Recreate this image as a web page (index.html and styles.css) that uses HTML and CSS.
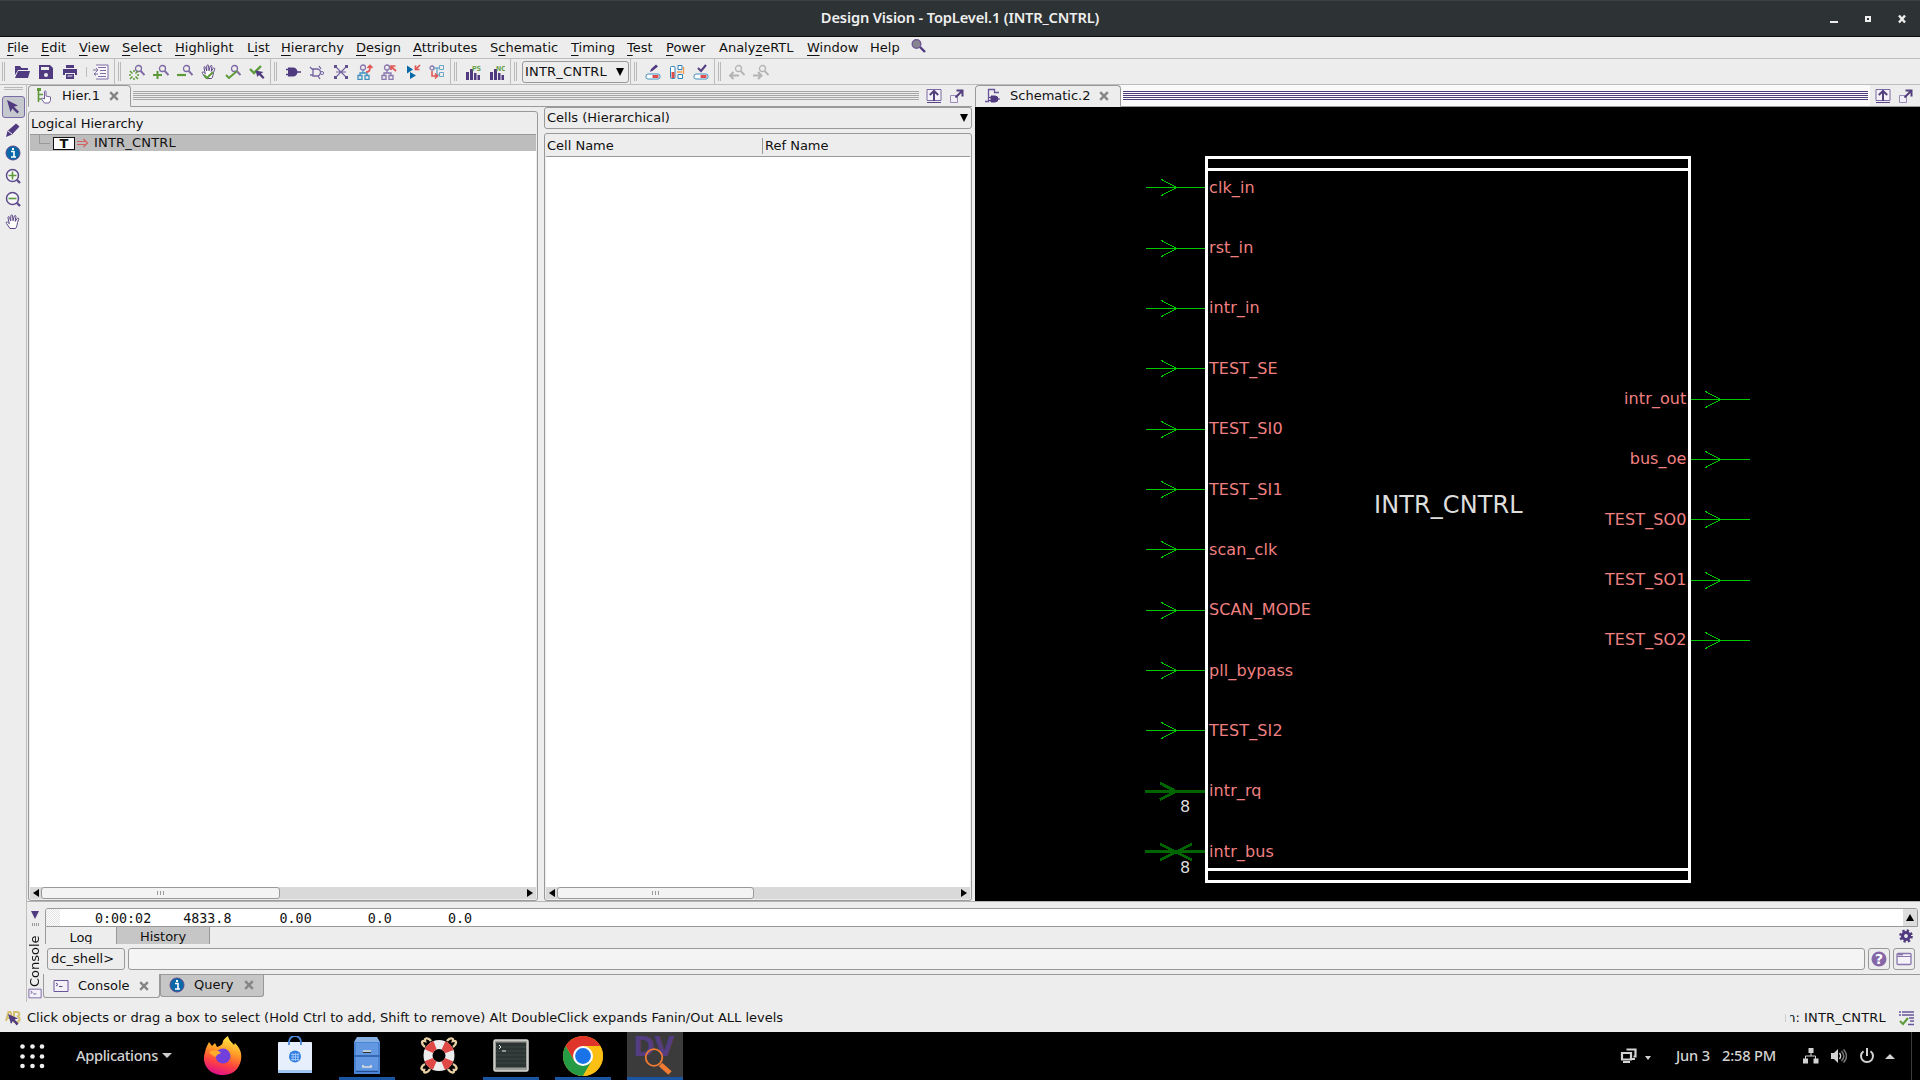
FILE: index.html
```html
<!DOCTYPE html>
<html lang="en">
<head>
<meta charset="utf-8">
<title>Design Vision - TopLevel.1 (INTR_CNTRL)</title>
<link rel="stylesheet" href="styles.css">
</head>
<body>
<svg class="defs" width="0" height="0">
  <symbol id="mag" viewBox="0 0 16 16"><circle cx="9.500" cy="4.500" r="3" fill="none" stroke="#7d68a3" stroke-width="1.300"/><path d="M11.800 7l3.700 4" stroke="#7d68a3" stroke-width="1.900"/></symbol>
  <symbol id="info" viewBox="0 0 16 16"><circle cx="8" cy="8" r="7" fill="#0868a8" stroke="#5c4a8a"/><path d="M6 6.500h3v5M6 12h5" fill="none" stroke="#fff" stroke-width="1.600"/><rect x="7" y="3" width="2" height="2" fill="#fff"/></symbol>
  <symbol id="hand" viewBox="0 0 16 16"><path d="M5 14.500L1.500 9.500C.5 8 2 7.500 3.200 8.700L4.300 9.700 3 3.800c-.2-1.500 1.300-1.500 1.600-.3L5.700 7 5.900 1.800c.1-1.200 1.600-1.200 1.700 0L8 6.700l1.400-4.600c.4-1.100 1.800-.7 1.500.5L10.200 7.400l2-3c.7-1 1.900-.2 1.400.9L12.500 8.500c-.5 2-.5 4.500-2 6z" fill="#fff" stroke="#5a4385"/></symbol>
  <symbol id="dock" viewBox="0 0 16 16"><path d="M1 1.500h14v11H1z" fill="#f4f2f8" stroke="#7a68a2"/><path d="M1 14.500h14" stroke="#5a4385"/><path d="M8 13V4M3.800 7L8 3l4.200 4" fill="none" stroke="#55407f" stroke-width="2"/></symbol>
  <symbol id="float" viewBox="0 0 16 16"><path d="M1.500 7.500h7v7h-7z" fill="#f1eff6" stroke="#9a8bb8"/><path d="M6.500 9.500L13 3M7.500 2.500h6v6" fill="none" stroke="#55407f" stroke-width="2"/></symbol>
  <symbol id="term" viewBox="0 0 16 14"><path d="M1 1.500h14v11H1z" fill="#f4f2f8" stroke="#6a559a"/><path d="M3 4l2 1.500L3 7M6 7.500h3.500" fill="none" stroke="#5a4385"/></symbol>
  <symbol id="x" viewBox="0 0 10 10"><path d="M1.200 1.200l7.600 7.600M8.800 1.200L1.200 8.800" stroke="#858585" stroke-width="2.400"/></symbol>
  <symbol id="arrow" viewBox="0 0 16 16"><path d="M2 1l11 5.500-4 1.300 5 5-1.700 1.700-5-5-1.800 3.800z" fill="#513b80"/></symbol>
  <symbol id="pin" viewBox="0 0 60 20" overflow="visible"><path d="M0 10.500h60" stroke="#00c800" shape-rendering="crispEdges"/><path d="M15.500 2.500l15 8-15 8" fill="none" stroke="#00c800" shape-rendering="crispEdges"/></symbol>
  <symbol id="bars" viewBox="0 0 16 16"><path d="M1 8h3v8H1zM5 5h3v11H5zM9 9h2.500v7H9zM12.500 11H15v5h-2.500z" fill="#513b80"/></symbol>
  <symbol id="pill" viewBox="0 0 16 16"><rect x="1" y="10" width="14" height="5" rx="2" fill="#fff" stroke="#4192bd"/><path d="M7.500 11h6v3h-6z" fill="#dd4d4d"/></symbol>
</svg>

<header class="title"><span>Design Vision - TopLevel.1 (INTR_CNTRL)</span>
  <svg width="80" height="12"><path d="M0 8h8v2H0z" fill="#eee"/><path d="M36 4h4v4h-4z" fill="none" stroke="#eee" stroke-width="2"/><path d="M69 2.500l6 7M75 2.500l-6 7" stroke="#eee" stroke-width="2.400"/></svg>
</header>

<nav class="menu">
  <span><u>F</u>ile</span><span><u>E</u>dit</span><span><u>V</u>iew</span><span><u>S</u>elect</span><span><u>H</u>ighlight</span><span>L<u>i</u>st</span><span><u>H</u>ierarchy</span><span><u>D</u>esign</span><span><u>A</u>ttributes</span><span>S<u>c</u>hematic</span><span><u>T</u>iming</span><span><u>T</u>est</span><span><u>P</u>ower</span><span>Analy<u>z</u>eRTL</span><span><u>W</u>indow</span><span>Help</span>
  <svg width="16" height="16"><circle cx="5.500" cy="6" r="4.300" fill="#87858f" stroke="#6e5b96" stroke-width="1.400"/><path d="M9 9l5 5" stroke="#513b80" stroke-width="2.400"/></svg>
</nav>

<div class="toolbar">
  <div class="group first"><i class="grip"></i>
    <svg viewBox="0 0 16 16"><path d="M1 2h5l1.500 2H14v2H4L1 11z M4 7h12l-2 7H1z" fill="#513b80"/></svg>
    <svg viewBox="0 0 16 16"><path d="M1 1h11l3 3v11H1z" fill="#513b80"/><path d="M3 3h8v3H3z" fill="#ededed"/><circle cx="8" cy="11" r="2" fill="#ededed"/></svg>
    <svg viewBox="0 0 16 16"><path d="M4 1h8v3H4zM1 5h14v6h-2V9H3v2H1zM4 10h8v5H4z" fill="#513b80"/><path d="M5.500 12h5" stroke="#ededed"/></svg>
    <i class="sep"></i>
    <svg viewBox="0 0 16 16"><path d="M3 1h12v14H3" fill="#f7f6fa" stroke="#7f6da6"/><path d="M5 3.500h8M7 6.500h6M7 9.500h6M5 12.500h8" stroke="#7f6da6"/><path d="M0 6h5M3 4l2 2-2 2M5 10H1M3 8.500L1 10l2 1.500" fill="none" stroke="#7f6da6"/></svg>
  </div>
  <div class="group g6"><i class="grip"></i>
    <svg viewBox="0 0 16 16"><use href="#mag" width="16" height="16"/><path d="M1 7l2.500 2.500M9 7L6.500 9.500M1 15l2.500-2.500M9 15l-2.500-2.500M0 11h2M8 11h2M5 6v2M5 14v2" stroke="#5c9a3a" stroke-width="1.500"/></svg>
    <svg viewBox="0 0 16 16"><use href="#mag" width="16" height="16"/><path d="M0 11h9M4.500 7v8" stroke="#5c9a3a" stroke-width="2"/></svg>
    <svg viewBox="0 0 16 16"><use href="#mag" width="16" height="16"/><path d="M0 11h9" stroke="#5c9a3a" stroke-width="2.200"/></svg>
    <svg viewBox="0 0 16 16"><use href="#hand" width="16" height="16"/><path d="M3 11l3 3 6-6" fill="none" stroke="#5c9a3a" stroke-width="2"/></svg>
    <svg viewBox="0 0 16 16"><use href="#mag" width="16" height="16"/><path d="M1 11l3 3 8-7" fill="none" stroke="#5c9a3a" stroke-width="2"/></svg>
    <svg viewBox="0 0 16 16"><path d="M1 5l4 4 7-7" fill="none" stroke="#5c9a3a" stroke-width="2.400"/><path d="M6.500 6.500l8 1.500-2.500 1.500 3.500 4-1.500 1.500-4-4-1.700 2z" fill="#513b80"/></svg>
  </div>
  <div class="group g7"><i class="grip"></i>
    <svg viewBox="0 0 16 16"><path d="M3 3.500h5a4.500 4.500 0 010 9H3z" fill="#513b80"/><path d="M1 5.500h3M1 10.500h3M12 8h4" stroke="#513b80" stroke-width="1.500"/></svg>
    <svg viewBox="0 0 16 16"><path d="M4 5h4a3.500 3.500 0 010 7H4zM1 3l3 3M1 11h3M11.500 9H15M10 2l2 3M9 12l2 3" fill="none" stroke="#7462a0" stroke-width="1.300"/><circle cx="13" cy="9" r="1.500" fill="#fff" stroke="#7462a0"/></svg>
    <svg viewBox="0 0 16 16"><path d="M2 2l12 12M14 2L2 14M3 8h10" stroke="#7462a0" stroke-width="1.100"/><path d="M1 1h3v3H1zM12 1h3v3h-3zM1 12h3v3H1zM12 12h3v3h-3z" fill="#65518e"/></svg>
    <svg viewBox="0 0 16 16"><circle cx="6" cy="3.500" r="2.500" fill="none" stroke="#8976ae" stroke-width="1.300"/><path d="M6 6v3M3 11V9h7v2M1 11.500h4v4H1zM8 11.500h4v4H8z" fill="none" stroke="#4291bd" stroke-width="1.300"/><path d="M9 8c4 0 4-2 4-6M10.500 4L13 1.500 15.500 4" fill="none" stroke="#e05654" stroke-width="1.700"/></svg>
    <svg viewBox="0 0 16 16"><circle cx="6" cy="3.500" r="2.500" fill="none" stroke="#8976ae" stroke-width="1.300"/><path d="M6 6v3M3 11V9h7v2M1 11.500h4v4H1zM8 11.500h4v4H8z" fill="none" stroke="#8976ae" stroke-width="1.300"/><path d="M15 7L10 2.500M10 6V2h4.500" fill="none" stroke="#e05654" stroke-width="1.700"/></svg>
    <svg viewBox="0 0 16 16"><path d="M2 1.500l6 4-6 4zM5 8l6 3.500L5 15zM2 10h3" fill="#0868a8"/><path d="M15 1l-4 4M10.500 1.500v4h4" fill="none" stroke="#e05654" stroke-width="1.700"/></svg>
    <svg viewBox="0 0 16 16"><circle cx="3" cy="4" r="2" fill="none" stroke="#8976ae" stroke-width="1.300"/><path d="M5 4h3v7h3M8 4h2" fill="none" stroke="#4291bd"/><path d="M10.500 1.500h4v4h-4zM10.500 8.500h4v4h-4z" fill="none" stroke="#69a8c8"/><path d="M3 7v5h5M6 9.500L8.500 12 6 14.500" fill="none" stroke="#e05654" stroke-width="1.600"/></svg>
  </div>
  <div class="group g2"><i class="grip"></i>
    <svg viewBox="0 0 16 16"><use href="#bars" width="16" height="16"/><text class="tiny" x="7" y="6.500">PS</text></svg>
    <svg viewBox="0 0 16 16"><use href="#bars" width="16" height="16"/><text class="tiny" x="7" y="6.500">NC</text></svg>
  </div>
  <div class="group gc"><i class="grip"></i><div class="combo"><span class="name">INTR_CNTRL</span><b class="down"></b></div></div>
  <div class="group g3"><i class="grip"></i>
    <svg viewBox="0 0 16 16"><use href="#pill" width="16" height="16"/><path d="M5 8l1-3 5-4.500 2 2-5 4z" fill="#513b80"/></svg>
    <svg viewBox="0 0 16 16"><rect x="1.500" y="2.500" width="4.500" height="12" rx="1" fill="#fff" stroke="#2f83b4"/><path d="M2.500 8h3v6h-3z" fill="#dd4d4d"/><path d="M9 1.500h4v4H9zM9 10.500h4.500v4H9z" fill="#fff" stroke="#2f83b4"/><path d="M8 8h5M14.500 3v7" stroke="#f29a52" stroke-width="1.400"/></svg>
    <svg viewBox="0 0 16 16"><use href="#pill" width="16" height="16"/><path d="M5 4l3 3 5-6" fill="none" stroke="#513b80" stroke-width="2"/></svg>
  </div>
  <div class="group last"><i class="grip"></i>
    <svg viewBox="0 0 16 16" class="off"><use href="#mag" width="16" height="16"/><path d="M1 11.500h9M4.500 8L1 11.500 4.500 15" fill="none" stroke="#7d68a3" stroke-width="2"/></svg>
    <svg viewBox="0 0 16 16" class="off"><use href="#mag" width="16" height="16"/><path d="M0 11.500h8M5 8l3.500 3.500L5 15" fill="none" stroke="#7d68a3" stroke-width="2"/></svg>
  </div>
</div>

<main class="work">
  <aside class="tools"><i class="hgrip"></i>
    <span class="on"><svg viewBox="0 0 16 16"><use href="#arrow"/></svg></span>
    <span><svg viewBox="0 0 16 16"><path d="M1 15l1.500-6L11 1.500l3.500 3L7 12.500z" fill="#513b80"/><path d="M3 9l4 3" stroke="#ededed"/></svg></span>
    <span><svg viewBox="0 0 16 16"><use href="#info"/></svg></span>
    <span><svg viewBox="0 0 16 16"><circle cx="7.500" cy="7.500" r="6" fill="#f7f7fa" stroke="#5c4a8a" stroke-width="1.500"/><path d="M12 12l3 3" stroke="#5c4a8a" stroke-width="2.400"/><path d="M3.500 7.500h8M7.500 3.500v8" stroke="#5c9a3a" stroke-width="1.600"/></svg></span>
    <span><svg viewBox="0 0 16 16"><circle cx="7.500" cy="7.500" r="6" fill="#f7f7fa" stroke="#5c4a8a" stroke-width="1.500"/><path d="M12 12l3 3" stroke="#5c4a8a" stroke-width="2.400"/><path d="M3.500 7.500h8" stroke="#5c9a3a" stroke-width="1.600"/></svg></span>
    <span><svg viewBox="0 0 16 16"><use href="#hand"/></svg></span>
  </aside>

  <div class="stack">
    <div class="docks">
      <section class="hier">
        <div class="tabrow">
          <div class="tab"><svg width="16" height="16"><path d="M1.500 2v12M2 6.500h4M2 11h4" stroke="#5c9a3a" stroke-width="1.600" fill="none"/><path d="M0 0h4v3H0z" fill="#5c9a3a"/><path d="M7.500 15l-3-4 1-1 2 1V3.500c0-1 1.500-1 1.500 0V8l4.500 1v3.500L12 15z" fill="#fff" stroke="#7462a0"/></svg><span>Hier.1</span><svg width="10" height="10"><use href="#x"/></svg></div>
          <i class="stripes"></i>
          <svg width="16" height="16"><use href="#dock"/></svg><svg width="16" height="16"><use href="#float"/></svg>
        </div>
        <div class="panes">
          <div class="frame tree">
            <div class="head">Logical Hierarchy</div>
            <div class="row"><i class="branch"></i><b>T</b><svg width="12" height="10"><path d="M0 3.500h8M0 6.500h8M6.500 1l4 4-4 4" fill="none" stroke="#d2605e" stroke-width="1.200"/></svg><span class="name">INTR_CNTRL</span></div>
            <div class="fill"></div>
            <div class="hscroll"><i class="la"></i><span class="thumb t1"><em></em></span><i class="ra"></i></div>
          </div>
          <div class="cells">
            <div class="combo wide">Cells (Hierarchical)<b class="down"></b></div>
            <div class="frame list">
              <div class="cols"><span>Cell Name</span><span>Ref Name</span></div>
              <div class="fill"></div>
              <div class="hscroll"><i class="la"></i><span class="thumb t2"><em></em></span><i class="ra"></i></div>
            </div>
          </div>
        </div>
      </section>

      <section class="schem">
        <div class="tabrow active">
          <div class="tab"><svg width="16" height="16"><path d="M0 13.500h3.500v-12h6v3H14" fill="none" stroke="#6a559a" stroke-width="1.300"/><path d="M6 8h4a3 3 0 010 6H6zM4 9.500h2M4 12.500h2M12 11h3" fill="#513b80" stroke="#513b80"/></svg><span>Schematic.2</span><svg width="10" height="10"><use href="#x"/></svg></div>
          <i class="stripes"></i>
          <div class="winbtns"><svg width="16" height="16"><use href="#dock"/></svg><svg width="16" height="16"><use href="#float"/></svg></div>
        </div>
        <svg class="canvas" width="945" height="794" viewBox="975 107 945 794">
          <path d="M1206.500 157.500H1689.500V881.500H1206.500zM1206.500 169.500H1689.500M1206.500 869.500H1689.500" fill="none" stroke="#fff" stroke-width="3"/>
          <use href="#pin" x="1146" y="177" width="60" height="20"/><use href="#pin" x="1146" y="238" width="60" height="20"/>
          <use href="#pin" x="1146" y="298" width="60" height="20"/><use href="#pin" x="1146" y="358" width="60" height="20"/>
          <use href="#pin" x="1146" y="419" width="60" height="20"/><use href="#pin" x="1146" y="479" width="60" height="20"/>
          <use href="#pin" x="1146" y="539" width="60" height="20"/><use href="#pin" x="1146" y="600" width="60" height="20"/>
          <use href="#pin" x="1146" y="660" width="60" height="20"/><use href="#pin" x="1146" y="720" width="60" height="20"/>
          <use href="#pin" x="1690" y="389" width="60" height="20"/><use href="#pin" x="1690" y="449" width="60" height="20"/>
          <use href="#pin" x="1690" y="509" width="60" height="20"/><use href="#pin" x="1690" y="570" width="60" height="20"/>
          <use href="#pin" x="1690" y="630" width="60" height="20"/>
          <g class="bus"><path d="M1145 791.500h60M1160 783l16 8.500-16 8M1145 851.500h60M1160 844l32 16M1192 844l-32 16"/></g>
          <path d="M1206.500 156V883M1689.500 156V883" stroke="#fff" stroke-width="3"/>
          <g class="lbl">
            <text x="1209" y="193">clk_in</text><text x="1209" y="253">rst_in</text><text x="1209" y="313">intr_in</text><text x="1209" y="374">TEST_SE</text><text x="1209" y="434">TEST_SI0</text><text x="1209" y="495">TEST_SI1</text><text x="1209" y="555">scan_clk</text><text x="1209" y="615">SCAN_MODE</text><text x="1209" y="676">pll_bypass</text><text x="1209" y="736">TEST_SI2</text><text x="1209" y="796">intr_rq</text><text x="1209" y="857">intr_bus</text>
          </g>
          <g class="lbl end">
            <text x="1686.500" y="404">intr_out</text><text x="1686.500" y="464">bus_oe</text><text x="1686.500" y="525">TEST_SO0</text><text x="1686.500" y="585">TEST_SO1</text><text x="1686.500" y="645">TEST_SO2</text>
          </g>
          <g class="white"><text x="1180" y="812">8</text><text x="1180" y="873">8</text><text class="big" x="1374" y="513">INTR_CNTRL</text></g>
        </svg>
      </section>
    </div>

    <section class="console">
      <div class="side"><i class="pdown"></i><i class="dots"></i><span>Console</span><svg width="14" height="11" viewBox="0 0 16 14" preserveAspectRatio="none"><use href="#term" width="16" height="14"/></svg></div>
      <div class="cbody">
        <div class="log"><i class="hatch"></i><pre>0:00:02    4833.8      0.00       0.0       0.0</pre><div class="vs"><i></i></div></div>
        <div class="ltabs"><span class="cur">Log</span><span class="alt">History</span><svg width="16" height="16"><circle cx="8" cy="8" r="5.500" fill="none" stroke="#513b80" stroke-width="2.600" stroke-dasharray="2.300 2.020"/><circle cx="8" cy="8" r="3.500" fill="none" stroke="#513b80" stroke-width="3.200"/></svg></div>
        <div class="cmd"><span class="prompt">dc_shell&gt;</span><span class="input"></span>
          <span class="btn"><svg width="16" height="16"><circle cx="8" cy="8" r="7.500" fill="#8567a8"/><text class="q" x="8" y="13">?</text></svg></span>
          <span class="btn"><svg width="16" height="14"><rect x="1" y="1.500" width="14" height="11" rx="1" fill="#f4f2f8" stroke="#8976ae" stroke-width="1.300"/><path d="M1 4.500h14" stroke="#8976ae"/><path d="M2 2.800h5" stroke="#65518e"/></svg></span></div>
        <div class="btabs">
          <div class="bt cur"><svg width="16" height="14"><use href="#term"/></svg><span>Console</span><svg width="10" height="10"><use href="#x"/></svg></div>
          <div class="bt alt"><svg width="16" height="16"><use href="#info"/></svg><span>Query</span><svg width="10" height="10"><use href="#x"/></svg></div>
        </div>
      </div>
    </section>
  </div>
</main>

<footer class="status">
  <svg width="16" height="16"><path d="M1 11L3.500 2h2L8 11M2 8h5M9 12V2h3c3 0 3 4 0 4.500 4 .5 3 5.500 0 5.500z" fill="none" stroke="#d6c070" stroke-width="2"/><path d="M3 4l10 4.500-3.500 1 4 4-1.800 2-3.700-4.500-2 3z" fill="#513b80"/></svg>
  <span>Click objects or drag a box to select (Hold Ctrl to add, Shift to remove) Alt DoubleClick expands Fanin/Out ALL levels</span>
  <span class="design"><i></i><span class="cut"><span>n</span></span>:&nbsp;<span class="name">INTR_CNTRL</span></span>
  <svg width="16" height="16"><path d="M0 2h2M3 2h12M0 5h2M3 5h12M10 8h5M11 11h4M9 14.500h6" stroke="#6a559a" stroke-width="1.600"/><path d="M1 11l3 3 5-6" fill="none" stroke="#5c9a3a" stroke-width="2"/></svg>
</footer>

<div class="taskbar">
  <svg class="apps" width="25" height="25"><g fill="#eee"><circle cx="2.500" cy="2.500" r="2.300"/><circle cx="12.500" cy="2.500" r="2.300"/><circle cx="22" cy="2.500" r="2.300"/><circle cx="2.500" cy="12.500" r="2.300"/><circle cx="12.500" cy="12.500" r="2.300"/><circle cx="22" cy="12.500" r="2.300"/><circle cx="2.500" cy="22" r="2.300"/><circle cx="12.500" cy="22" r="2.300"/><circle cx="22" cy="22" r="2.300"/></g></svg>
  <span class="appmenu">Applications<svg width="10" height="5"><path d="M0 0h10L5 5z" fill="#ccc"/></svg></span>
  <div class="dockbar">
    <span><svg width="40" height="40" viewBox="0 0 40 40"><defs><linearGradient id="ff" x1=".7" y1="0" x2=".4" y2="1"><stop offset="0" stop-color="#fff04a"/><stop offset=".4" stop-color="#ff9a25"/><stop offset=".7" stop-color="#ff4340"/><stop offset="1" stop-color="#e0108a"/></linearGradient></defs><path d="M2 16C3 11 5 8 6 6l3 4 3-3 2 4c4-1 6-3 6-6 1-2 3-4 5-5 1 5 4 6 6 9l1-2c5 5 7 10 6 17-2 10-9 15-18 15C8 39 0 31 1 20z" fill="url(#ff)"/><circle cx="20" cy="20" r="7.500" fill="#7140dc"/><path d="M6 16c5-2 9-2 12 1-2 1-4 1-5 4-2-1-5-2-7-5z" fill="#ffac2d"/></svg></span>
    <span><svg width="36" height="40" viewBox="0 0 36 40"><rect x="1" y="6" width="34" height="31" rx="1" fill="#e8effc"/><path d="M1 34h34v3H1z" fill="#9fc5f0"/><path d="M12 9V6a6 6 0 0112 0v3" fill="none" stroke="#4b88dc" stroke-width="1.800"/><circle cx="18" cy="20.500" r="6" fill="#3180e2"/><path d="M14 18.500h8M14 21h8M14 23.500h8M16 17v8M18.500 17v8M21 17v8" stroke="#bcd6fa" stroke-width=".7"/></svg></span>
    <span class="run"><svg width="28" height="40" viewBox="0 0 28 40"><path d="M4 1h20l3 5H1z" fill="#86afe4"/><path d="M1 6h26v32H1z" fill="#4b84d4"/><path d="M3 7h22v12H3zM3 21h22v13H3z" fill="#6298e2"/><path d="M1 20h26M3 35.500h22" stroke="#244f91"/><path d="M10 15h8M10 29v2h8v-2" fill="none" stroke="#ddd" stroke-width="1.700"/><path d="M10 16.500h8" stroke="#333"/></svg></span>
    <span><svg width="40" height="40" viewBox="0 0 40 40"><g fill="none" stroke="#e8cfa4" stroke-width="2.400"><path d="M12 5C9 1 5 2 6 5c-4-1-4 3 0 6M28 5c3-4 7-3 6 0 4-1 4 3 0 6M11 33c-3 5-7 4-6 1-4 0-3-4 1-6M29 33c3 5 7 4 6 1 4 0 3-4-1-6"/></g><circle cx="20" cy="19.500" r="11" fill="none" stroke="#ececec" stroke-width="9"/><circle cx="20" cy="19.500" r="11" fill="none" stroke="#e04846" stroke-width="9" stroke-dasharray="8.640 8.640" stroke-dashoffset="-4.300"/></svg></span>
    <span class="run"><svg width="36" height="40" viewBox="0 0 36 40"><rect x="1" y="4" width="34" height="31" rx="1.500" fill="#9c9d99" stroke="#d7d8d3" stroke-width="1.500"/><path d="M3 6.500h30v25H3z" fill="#2c3533"/><path d="M3 11h30M3 15h30M3 19h30M3 23h30M3 27h30" stroke="#3b4643"/><path d="M6 9l2 2-2 2M9 15h4" fill="none" stroke="#eee"/></svg></span>
    <span class="run"><svg width="40" height="40" viewBox="0 0 40 40"><circle cx="20" cy="20" r="20" fill="#fcc014"/><path d="M20 20v-10H37.300A20 20 0 002.700 10L11.300 25z" fill="#df3429"/><path d="M2.700 10A20 20 0 0020 40l8.700-15-17.400 0z" fill="#259b46"/><path d="M28.700 25L20 40A20 20 0 0037.300 10H20z" fill="#fcc014"/><circle cx="20" cy="20" r="10" fill="#fff"/><circle cx="20" cy="20" r="7.900" fill="#1a73e8"/></svg></span>
    <span class="run focus"><svg class="open" width="40" height="40" viewBox="0 0 40 40"><text class="dv" x="-1.500" y="19.500" textLength="41">DV</text><circle cx="19" cy="21.500" r="8.300" fill="none" stroke="#ee7a33" stroke-width="1.800"/><path d="M25.500 28.500l9.500 8.500" stroke="#ee7a33" stroke-width="5"/></svg></span>
  </div>
  <div class="tray">
    <svg width="32" height="16"><path d="M6.500 1.500h9v7h-2M2 5h9v6.500H2z" fill="none" stroke="#d3d3d3" stroke-width="2.200"/><path d="M3 14h7M12 11h3" stroke="#d3d3d3" stroke-width="2"/><path d="M25 8h6l-3 4z" fill="#d3d3d3"/></svg>
    <span class="date">Jun 3</span><span class="time">2:58 PM</span>
    <svg width="16" height="16"><path d="M5.500 0h5v5h-5zM0 10.500h5v5H0zM10.500 10.500h5v5h-5z" fill="#d3d3d3"/><path d="M8 5v3M2.500 11V8h10v3" fill="none" stroke="#d3d3d3"/></svg>
    <svg width="16" height="16"><path d="M0 5h3l4-4v14l-4-4H0z" fill="#d3d3d3"/><path d="M8.500 5c1.500 2 1.500 4 0 6" fill="none" stroke="#d3d3d3" stroke-width="1.400"/><path d="M10.500 3c3 3.500 3 7 0 10M12.500 1.500c4 4 4 9 0 13" fill="none" stroke="#777" stroke-width="1.500"/></svg>
    <svg width="16" height="16"><path d="M4.500 3.200a6 6 0 107 0M8 0v8" fill="none" stroke="#d3d3d3" stroke-width="2"/></svg>
    <svg width="10" height="5"><path d="M0 5h10L5 0z" fill="#d3d3d3"/></svg>
    <i class="edge"></i>
  </div>
</div>
</body>
</html>
```
FILE: styles.css
```css
* { box-sizing: border-box; }
html, body { margin: 0; height: 1080px; overflow: hidden; }
body { width: 1920px; display: flex; flex-direction: column; background: #ededed; color: #111; font: 13px/16px "DejaVu Sans", sans-serif; white-space: nowrap; }
svg { display: block; flex: none; }
i, em { font-style: normal; flex: none; display: block; }
.defs { position: absolute; }
.name { letter-spacing: .2px; }

.title { height: 37px; flex: none; background: #2d3234; border-top: 1px solid #3c4244; border-bottom: 1px solid #0c0d0d; display: grid; grid-template-columns: 1fr auto 1fr; align-items: center; color: #eee; font: 600 14.67px/20px "Noto Sans", sans-serif; letter-spacing: -.16px; }
.title span { grid-column: 2; padding-bottom: 3px; }
.title svg { justify-self: end; margin-right: 10px; }

.menu { height: 22px; flex: none; border-bottom: 1px solid #bdbdbd; padding: 3px 0 0 7px; display: grid; grid-template-columns: 34px 38px 43px 53px 72px 34px 75px 57px 77px 81px 56px 39px 53px 88px 63px 41px 16px; }
.menu svg { margin-top: -2px; }
.menu u { text-decoration-thickness: 1px; text-underline-offset: 3px; text-decoration-skip-ink: none; }

.toolbar { height: 26px; flex: none; display: flex; border-bottom: 1px solid #bdbdbd; }
.group { flex: none; display: flex; align-items: center; border-right: 1px solid #bdbdbd; padding-left: 3px; }
.group.first { padding-left: 2px; width: 115px; }
.group.first .grip { margin-right: 5px; }
.g6 { width: 156px; }
.g7 { width: 180px; }
.g2 { width: 60px; }
.gc { width: 120px; }
.g3 { width: 84px; }
.group.last { border: 0; }
.grip { width: 3px; height: 19px; border: solid #b9b9b9; border-width: 0 1px; margin-right: 4px; }
.group > svg { width: 16px; height: 16px; margin: 0 4px; }
.sep { width: 1px; height: 10px; background: #bdbdbd; margin: 0 2px 0 4px; }
.off { opacity: .45; filter: grayscale(1); }
.tiny { font: 700 7px "DejaVu Sans Condensed", "DejaVu Sans", sans-serif; fill: #6ba352; }
.combo { width: 107px; height: 22px; border: 1px solid #999; border-radius: 3px; margin: 0 1px; padding: 2px 4px 2px 2px; display: flex; justify-content: space-between; align-items: center; }
.down { border: solid transparent; border-width: 8px 4px 0; border-top-color: #000; }

.work { height: 917px; flex: none; display: flex; }
.tools { width: 27px; flex: none; display: flex; flex-direction: column; align-items: center; padding-top: 2px; border-right: 1px solid #bdbdbd; }
.hgrip { width: 19px; height: 3px; border: solid #b9b9b9; border-width: 1px 0; margin-bottom: 6px; }
.tools span { width: 23px; height: 22px; margin-bottom: 1px; display: grid; place-items: center; }
.tools svg { width: 16px; height: 16px; }
.tools .on { background: #c5c9cd; border: 1px solid #7b6ba5; border-radius: 3px; }

.stack { flex: 1; display: flex; flex-direction: column; min-width: 0; }
.docks { height: 817px; flex: none; display: flex; border-bottom: 1px solid #b5b5b5; }
.hier { width: 948px; flex: none; display: flex; flex-direction: column; padding-left: 1px; }
.schem { flex: 1; display: flex; flex-direction: column; }
.tabrow { height: 22px; flex: none; display: flex; align-items: flex-start; padding-right: 11px; }
.tab { height: 22px; border: 1px solid #999; border-bottom-color: #ededed; border-radius: 4px 4px 0 0; display: flex; align-items: center; width: 103px; background: #ededed; padding: 0 11px 0 8px; }
.tab span { margin: 0 auto 0 9px; }
.stripes { flex: 1; height: 9px; margin: 6px 7px 0 2px; background: repeating-linear-gradient(#a6a6a6 0 1px, transparent 1px 2px); }
.hier .tabrow { background: linear-gradient(#999, #999) 102px 21px / 842px 1px no-repeat; }
.hier .tabrow > svg { margin-top: 3px; }
.hier .tabrow > svg + svg { margin-left: 7px; margin-right: -1px; }
.active { background: linear-gradient(#999, #999) 0 21px / 100% 1px no-repeat, #fafafa; padding: 0; }
.active .tab { width: 146px; padding: 0 11px 0 9px; }
.active .stripes { margin: 6px 2px 0; background: repeating-linear-gradient(#4e3d7a 0 1px, transparent 1px 2px); }
.winbtns { width: 50px; height: 21px; background: #ededed; display: flex; gap: 7px; padding: 3px 0 0 5px; }
.canvas { background: #000; }
.bus path { fill: none; stroke: #006400; stroke-width: 3; shape-rendering: crispEdges; }
.lbl { font: 16px "DejaVu Sans", sans-serif; fill: #f08080; letter-spacing: .1px; }
.end { text-anchor: end; }
.white { font: 16px "DejaVu Sans", sans-serif; fill: #ddd; }
.big { font-size: 24px; letter-spacing: .1px; }

.panes { flex: 1; display: flex; gap: 6px; padding-right: 3px; }
.frame { border: 1px solid #999; border-radius: 3px; display: flex; flex-direction: column; padding: 1px; }
.tree { width: 510px; flex: none; margin: 4px 0 0; }
.head { height: 22px; padding: 3px 1px; border-bottom: 1px solid #999; }
.row { height: 16px; background: #bdbdbd; display: flex; align-items: center; padding-left: 9px; }
.branch { width: 11px; height: 9px; border: solid #999; border-width: 0 0 1px 1px; margin: 0 3px 8px 0; }
.row b { width: 22px; height: 13px; border: 1px solid #111; background: #fff; text-align: center; line-height: 11px; margin-right: 2px; }
.row svg { margin-right: 5px; }
.fill { flex: 1; background: #fff; }
.cells { flex: 1; min-width: 0; display: flex; flex-direction: column; }
.combo.wide { width: auto; margin: 0 0 4px; flex: none; padding-right: 3px; }
.list { flex: 1; }
.cols { height: 22px; border-bottom: 1px solid #999; display: flex; padding: 2px 1px; line-height: 18px; }
.cols span { width: 215px; flex: none; }
.cols span + span { width: auto; border-left: 1px solid #999; height: 16px; line-height: 16px; padding-left: 2px; margin-top: 1px; }
.hscroll { height: 12px; background: #d9d9d9; display: flex; align-items: center; padding: 0 3px; }
.la, .ra { border: solid transparent; border-width: 4px 6px; }
.la { border-right-color: #000; border-left-width: 0; }
.ra { border-left-color: #000; border-right-width: 0; margin-left: auto; }
.thumb { height: 12px; border: 1px solid #999; border-radius: 3px; background: #f3f3f3; display: grid; place-items: center; margin-left: 2px; }
.t1 { width: 239px; }
.t2 { width: 197px; }
.thumb em { width: 7px; height: 4px; background: repeating-linear-gradient(90deg, #999 0 1px, transparent 1px 3px); }

.console { flex: 1; display: flex; }
.side { width: 16px; flex: none; display: flex; flex-direction: column; align-items: center; padding-top: 9px; }
.pdown { border: solid transparent; border-width: 8px 4px 0; border-top-color: #513b80; }
.dots { width: 7px; height: 3px; margin: 4px 0 8px; background: repeating-linear-gradient(90deg, #999 0 1px, transparent 1px 2px); }
.side span { writing-mode: vertical-rl; transform: rotate(180deg); height: 53px; }
.side svg { margin-top: 1px; }
.cbody { flex: 1; display: flex; flex-direction: column; padding-top: 6px; }
.log { height: 19px; border: 1px solid #999; border-radius: 3px 3px 0 0; background: #fff; display: flex; margin: 0 2px 0 2px; overflow: hidden; }
.hatch { width: 14px; background: repeating-conic-gradient(#e2e2e2 0 25%, #fff 0 50%) 0 0 / 2px 2px; }
.log pre { margin: 2px 0 0 35px; font: 13.33px/16px "DejaVu Sans Mono", monospace; flex: 1; }
.vs { width: 14px; background: #ddd; display: grid; place-items: center; }
.vs i { border: solid transparent; border-width: 0 4px 7px; border-bottom-color: #000; }
.ltabs { height: 17px; display: flex; padding-left: 2px; }
.ltabs span { text-align: center; line-height: 20px; height: 17px; overflow: hidden; }
.ltabs .cur { width: 71px; border-left: 1px solid #999; line-height: 22px; }
.ltabs .alt { width: 94px; background: #c6c6c6; border: solid #999; border-width: 0 1px; }
.ltabs svg { margin: 1px 6px 0 auto; }
.cmd { display: flex; height: 22px; margin: 4px 5px 0 4px; gap: 3px; }
.cmd span { border: 1px solid #999; border-radius: 3px; }
.prompt { width: 78px; padding: 2px 3px; }
.input { flex: 1; background: #f4f4f4; }
.btn { width: 22px; display: grid; place-items: center; }
.q { font: 700 14px "DejaVu Sans", sans-serif; fill: #fff; text-anchor: middle; }
.btabs { margin-top: 4px; height: 25px; border-top: 1px solid #999; display: flex; align-items: flex-start; }
.bt { display: flex; align-items: center; height: 23px; border: 1px solid #999; border-width: 0 1px 1px; border-radius: 0 0 3px 3px; padding: 0 10px 1px 9px; }
.bt.cur { width: 117px; margin-top: -1px; background: #ededed; height: 24px; padding: 0 10px 0 9px; }
.bt.alt { width: 104px; height: 22px; background: #c6c6c6; padding: 0 9px 1px 8px; }
.bt span { margin: 0 auto 0 9px; }

.status { height: 30px; flex: none; display: flex; align-items: center; padding: 2px 5px 0; }
.status > span { margin-left: 6px; }
.design { display: flex; margin-left: auto !important; margin-right: 13px; align-items: center; }
.design i { width: 1px; height: 8px; background: #ccc; margin-right: 4px; }
.cut { width: 5px; overflow: hidden; display: flex; justify-content: flex-end; }

.taskbar { height: 48px; flex: none; background: #000; display: flex; align-items: center; color: #d3d3d3; font: 500 14.67px/20px "Noto Sans", sans-serif; }
.apps { margin-left: 19.5px; }
.appmenu { width: 96px; margin: 0 0 2px 31.5px; display: flex; align-items: center; justify-content: space-between; letter-spacing: -.35px; }
.dockbar { display: flex; gap: 16px; margin-left: 23px; align-self: stretch; }
.dockbar span { width: 56px; display: flex; justify-content: center; padding-top: 4px; border-bottom: 3px solid #000; }
.dockbar .run { border-color: #1a55a2; }
.dockbar .focus { background: #3b3b3b; }
.open { overflow: visible; }
.dv { font: 700 26px "DejaVu Sans", sans-serif; fill: #553d82; }
.tray { display: flex; align-items: center; align-self: stretch; margin-left: auto; width: 300px; }
.tray span { padding-bottom: 2px; }
.date { width: 46px; margin-left: 24px; letter-spacing: -.2px; }
.time { width: 81px; letter-spacing: -.2px; }
.tray svg + svg { margin-left: 12px; }
.tray svg:nth-last-child(2) { margin-left: 10px; }
.edge { width: 1px; align-self: stretch; background: #3a3a3a; margin-left: 16px; }
```
